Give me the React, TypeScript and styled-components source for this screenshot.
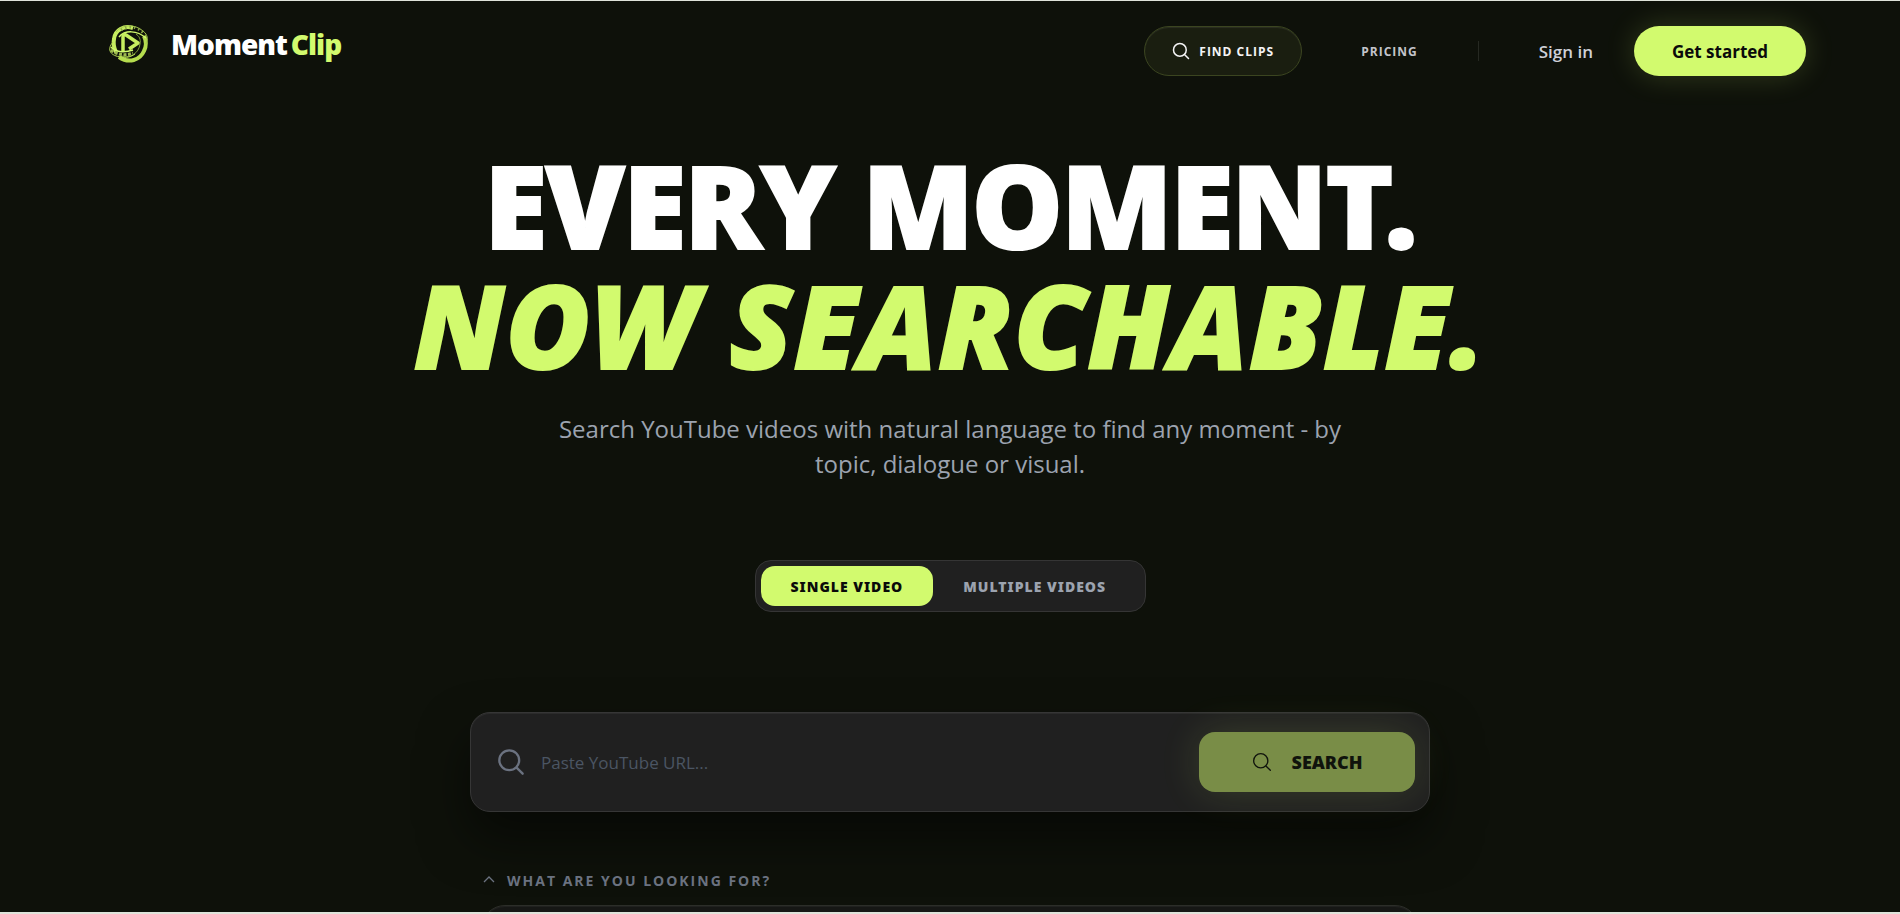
import React, { useState } from "react";
import styled, { createGlobalStyle, css } from "styled-components";

const lime = "#d2fa6e";
const night = "#0e110a";

const GlobalStyle = createGlobalStyle`
  *, *::before, *::after { box-sizing: border-box; }
  html { background: #dfe3da; }
  body {
    margin: 0;
    font-family: "Segoe UI", "Open Sans", "Noto Sans", sans-serif;
    background: #dfe3da;
    overflow: hidden;
  }
  button, input, textarea { font: inherit; }
`;

const black = css`
  font-family: "Segoe UI", "Noto Sans", "Open Sans", sans-serif;
  font-weight: 900;
`;

const Page = styled.div`
  height: calc(100vh - 3px);
  margin-top: 1px;
  overflow: hidden;
  background: ${night};
  color: #fff;
`;

const Header = styled.header`
  display: flex;
  align-items: center;
  justify-content: space-between;
  height: 100px;
  padding: 0 94px 0 104px;
`;

const Brand = styled.a`
  display: flex;
  align-items: center;
  gap: 19px;
  padding-bottom: 14px;
  color: #fff;
  font-size: 28px;
  font-weight: 800;
  letter-spacing: -1px;
  line-height: 40px;
  text-decoration: none;
`;

const BrandAccent = styled.span`
  margin-left: 4px;
  color: ${lime};
`;

const Nav = styled.nav`
  display: flex;
  align-items: center;
`;

const navText = css`
  font-size: 12px;
  font-weight: 700;
  letter-spacing: 1px;
  text-decoration: none;
`;

const FindClips = styled.a`
  ${navText}
  display: flex;
  align-items: center;
  justify-content: center;
  gap: 9px;
  width: 158px;
  height: 50px;
  border: 1px solid #3b4520;
  border-radius: 25px;
  background: #1a1e10;
  box-shadow: inset 0 1px 1px rgba(255, 255, 255, 0.08);
  color: #f4f4f5;
`;

const Pricing = styled.a`
  ${navText}
  margin-left: 59px;
  color: #c3c4cb;
`;

const Divider = styled.span`
  width: 1px;
  height: 20px;
  margin: 0 60px;
  background: #262922;
`;

const SignIn = styled.a`
  color: #cfd0d8;
  font-size: 17px;
  font-weight: 600;
  text-decoration: none;
`;

const GetStarted = styled.button`
  width: 172px;
  height: 50px;
  margin-left: 41px;
  border: 0;
  border-radius: 25px;
  background: ${lime};
  box-shadow: 0 0 30px rgba(210, 250, 110, 0.18);
  color: #0a0a0a;
  font-size: 17px;
  font-weight: 700;
`;

const Main = styled.main`
  display: flex;
  flex-direction: column;
  align-items: center;
  padding-top: 44px;
`;

const Headline = styled.h1`
  ${black}
  margin: 0;
  font-size: 115px;
  line-height: 120px;
  text-align: center;
`;

const HeadlineLine = styled.span<{ $accent?: boolean }>`
  display: block;
  letter-spacing: -2px;
  white-space: nowrap;
  -webkit-text-stroke: 2px currentColor;
  ${(p) => p.$accent && css`
    color: ${lime};
    font-style: italic;
    letter-spacing: 1px;
  `}
`;

const Lead = styled.p`
  max-width: 800px;
  margin: 26px 0 0;
  color: #9ca3af;
  font-size: 24px;
  line-height: 35px;
  text-align: center;
`;

const Tabs = styled.div`
  display: flex;
  width: 391px;
  margin-top: 79px;
  padding: 5px;
  border: 1px solid #353535;
  border-radius: 16px;
  background: #202020;
`;

const Tab = styled.button<{ $active: boolean }>`
  ${black}
  height: 40px;
  padding: 0 30px;
  border: 0;
  border-radius: 14px;
  background: ${(p) => (p.$active ? lime : "transparent")};
  color: ${(p) => (p.$active ? "#0a0a0a" : "#9ca3af")};
  font-size: 14px;
  letter-spacing: 1px;
  white-space: nowrap;
`;

const SearchArea = styled.form`
  width: 960px;
  max-width: 100%;
  margin-top: 100px;
`;

const SearchBar = styled.div`
  display: flex;
  align-items: center;
  height: 100px;
  padding: 0 14px 0 26px;
  border: 1px solid #363636;
  border-radius: 20px;
  background: #202020;
  box-shadow: 0 25px 50px rgba(0, 0, 0, 0.5), inset 0 1px 1px rgba(255, 255, 255, 0.06);
  color: #6b7280;
`;

const UrlInput = styled.input`
  flex: 1;
  min-width: 0;
  height: 60px;
  margin-left: 16px;
  padding: 0;
  border: 0;
  outline: 0;
  background: transparent;
  color: #fff;
  font-size: 17px;
  &::placeholder { color: #4b5563; opacity: 1; }
`;

const SearchButton = styled.button`
  ${black}
  display: flex;
  align-items: center;
  justify-content: center;
  gap: 20px;
  width: 216px;
  height: 60px;
  border: 0;
  border-radius: 16px;
  background: #798d47;
  box-shadow: 0 0 40px rgba(210, 250, 110, 0.14);
  color: #10130c;
  font-size: 18px;
`;

const Details = styled.div`
  padding: 56px 11px 0;
`;

const Toggle = styled.button`
  display: flex;
  align-items: center;
  gap: 10px;
  height: 24px;
  padding: 0;
  border: 0;
  background: transparent;
  color: #6b7280;
  font-size: 14px;
  font-weight: 700;
  letter-spacing: 2px;
`;

const Query = styled.textarea`
  display: block;
  width: 100%;
  height: 110px;
  margin-top: 13px;
  padding: 24px;
  border: 1px solid #2c2e29;
  border-radius: 24px;
  outline: 0;
  resize: none;
  background: #161715;
  box-shadow: inset 0 1px 1px rgba(255, 255, 255, 0.05);
  color: #fff;
`;

const Magnifier = ({ size, stroke = 2 }: { size: number; stroke?: number }) => (
  <svg width={size} height={size} viewBox="0 0 24 24" fill="none" stroke="currentColor" strokeWidth={stroke} strokeLinecap="round" aria-hidden="true">
    <circle cx="10.5" cy="10.5" r="8.5" />
    <path d="m17 17 5 5" />
  </svg>
);

const LogoMark = () => (
  <svg width="48" height="48" viewBox="0 0 48 48" fill="none" aria-hidden="true">
    <path d="M29 8C20 5 11 10 10 19c-1 5 0 9 2 13" stroke="#c6ed5f" strokeWidth="4" />
    <path d="M15 37c10 7 21 3 25-6 3-6 2-11 0-15" stroke="#b5dc4e" strokeWidth="4" />
    <path d="M18 36c8 3 17-3 18-12 1-5-1-8-4-10" stroke="#809d3b" strokeWidth="1" />
    <path d="M12 12C18 4 31 4 39 11c5 4 5 8 3 13" stroke="#a8cb50" strokeWidth="1" />
    <path d="M15 17c6-7 18-7 27 1" stroke="#d2fa6e" strokeWidth="1.5" />
    <path d="M17 10c8-5 17-4 24 5" stroke="#8ba646" strokeWidth="3" strokeDasharray="1.5 3" />
    <path d="M9 22c-7 8-2 14 8 15 5 1 10 0 14-3" stroke="#b8dc56" strokeWidth="1" />
    <path d="M7 27c4 5 13 6 22 3" stroke="#d2fa6e" strokeWidth="1.5" />
    <path d="M7 30c6 5 15 6 22 3" stroke="#9dba4e" strokeWidth="3" strokeDasharray="3 1.5" />
    <path d="M19 31V17c0-2 1-3 3-2l12 8-9 6" stroke="#c6ed5f" strokeWidth="3.5" strokeLinejoin="round" />
  </svg>
);

const Chevron = () => (
  <svg width="16" height="16" viewBox="0 0 16 16" fill="none" stroke="currentColor" strokeWidth="1.3" aria-hidden="true">
    <path d="m3 10 5-5 5 5" />
  </svg>
);

const modes = ["SINGLE VIDEO", "MULTIPLE VIDEOS"];

export default function App() {
  const [mode, setMode] = useState(modes[0]);
  const [open, setOpen] = useState(true);

  return (
    <>
      <GlobalStyle />
      <Page>
        <Header>
          <Brand href="#">
            <LogoMark />
            <span>Moment<BrandAccent>Clip</BrandAccent></span>
          </Brand>
          <Nav>
            <FindClips href="#find"><Magnifier size={18} />FIND CLIPS</FindClips>
            <Pricing href="#pricing">PRICING</Pricing>
            <Divider />
            <SignIn href="#signin">Sign in</SignIn>
            <GetStarted type="button">Get started</GetStarted>
          </Nav>
        </Header>
        <Main>
          <Headline>
            <HeadlineLine>EVERY MOMENT.</HeadlineLine>
            <HeadlineLine $accent>NOW SEARCHABLE.</HeadlineLine>
          </Headline>
          <Lead>
            Search YouTube videos with natural language to find any moment - by topic, dialogue or visual.
          </Lead>
          <Tabs role="tablist">
            {modes.map((m) => (
              <Tab key={m} type="button" role="tab" aria-selected={m === mode} $active={m === mode} onClick={() => setMode(m)}>
                {m}
              </Tab>
            ))}
          </Tabs>
          <SearchArea onSubmit={(e) => e.preventDefault()}>
            <SearchBar>
              <Magnifier size={28} />
              <UrlInput type="text" aria-label="YouTube URL" placeholder="Paste YouTube URL..." />
              <SearchButton type="submit"><Magnifier size={20} stroke={1.6} />SEARCH</SearchButton>
            </SearchBar>
            <Details>
              <Toggle type="button" aria-expanded={open} onClick={() => setOpen(!open)}>
                <Chevron />WHAT ARE YOU LOOKING FOR?
              </Toggle>
              {open && <Query aria-label="What are you looking for?" />}
            </Details>
          </SearchArea>
        </Main>
      </Page>
    </>
  );
}
